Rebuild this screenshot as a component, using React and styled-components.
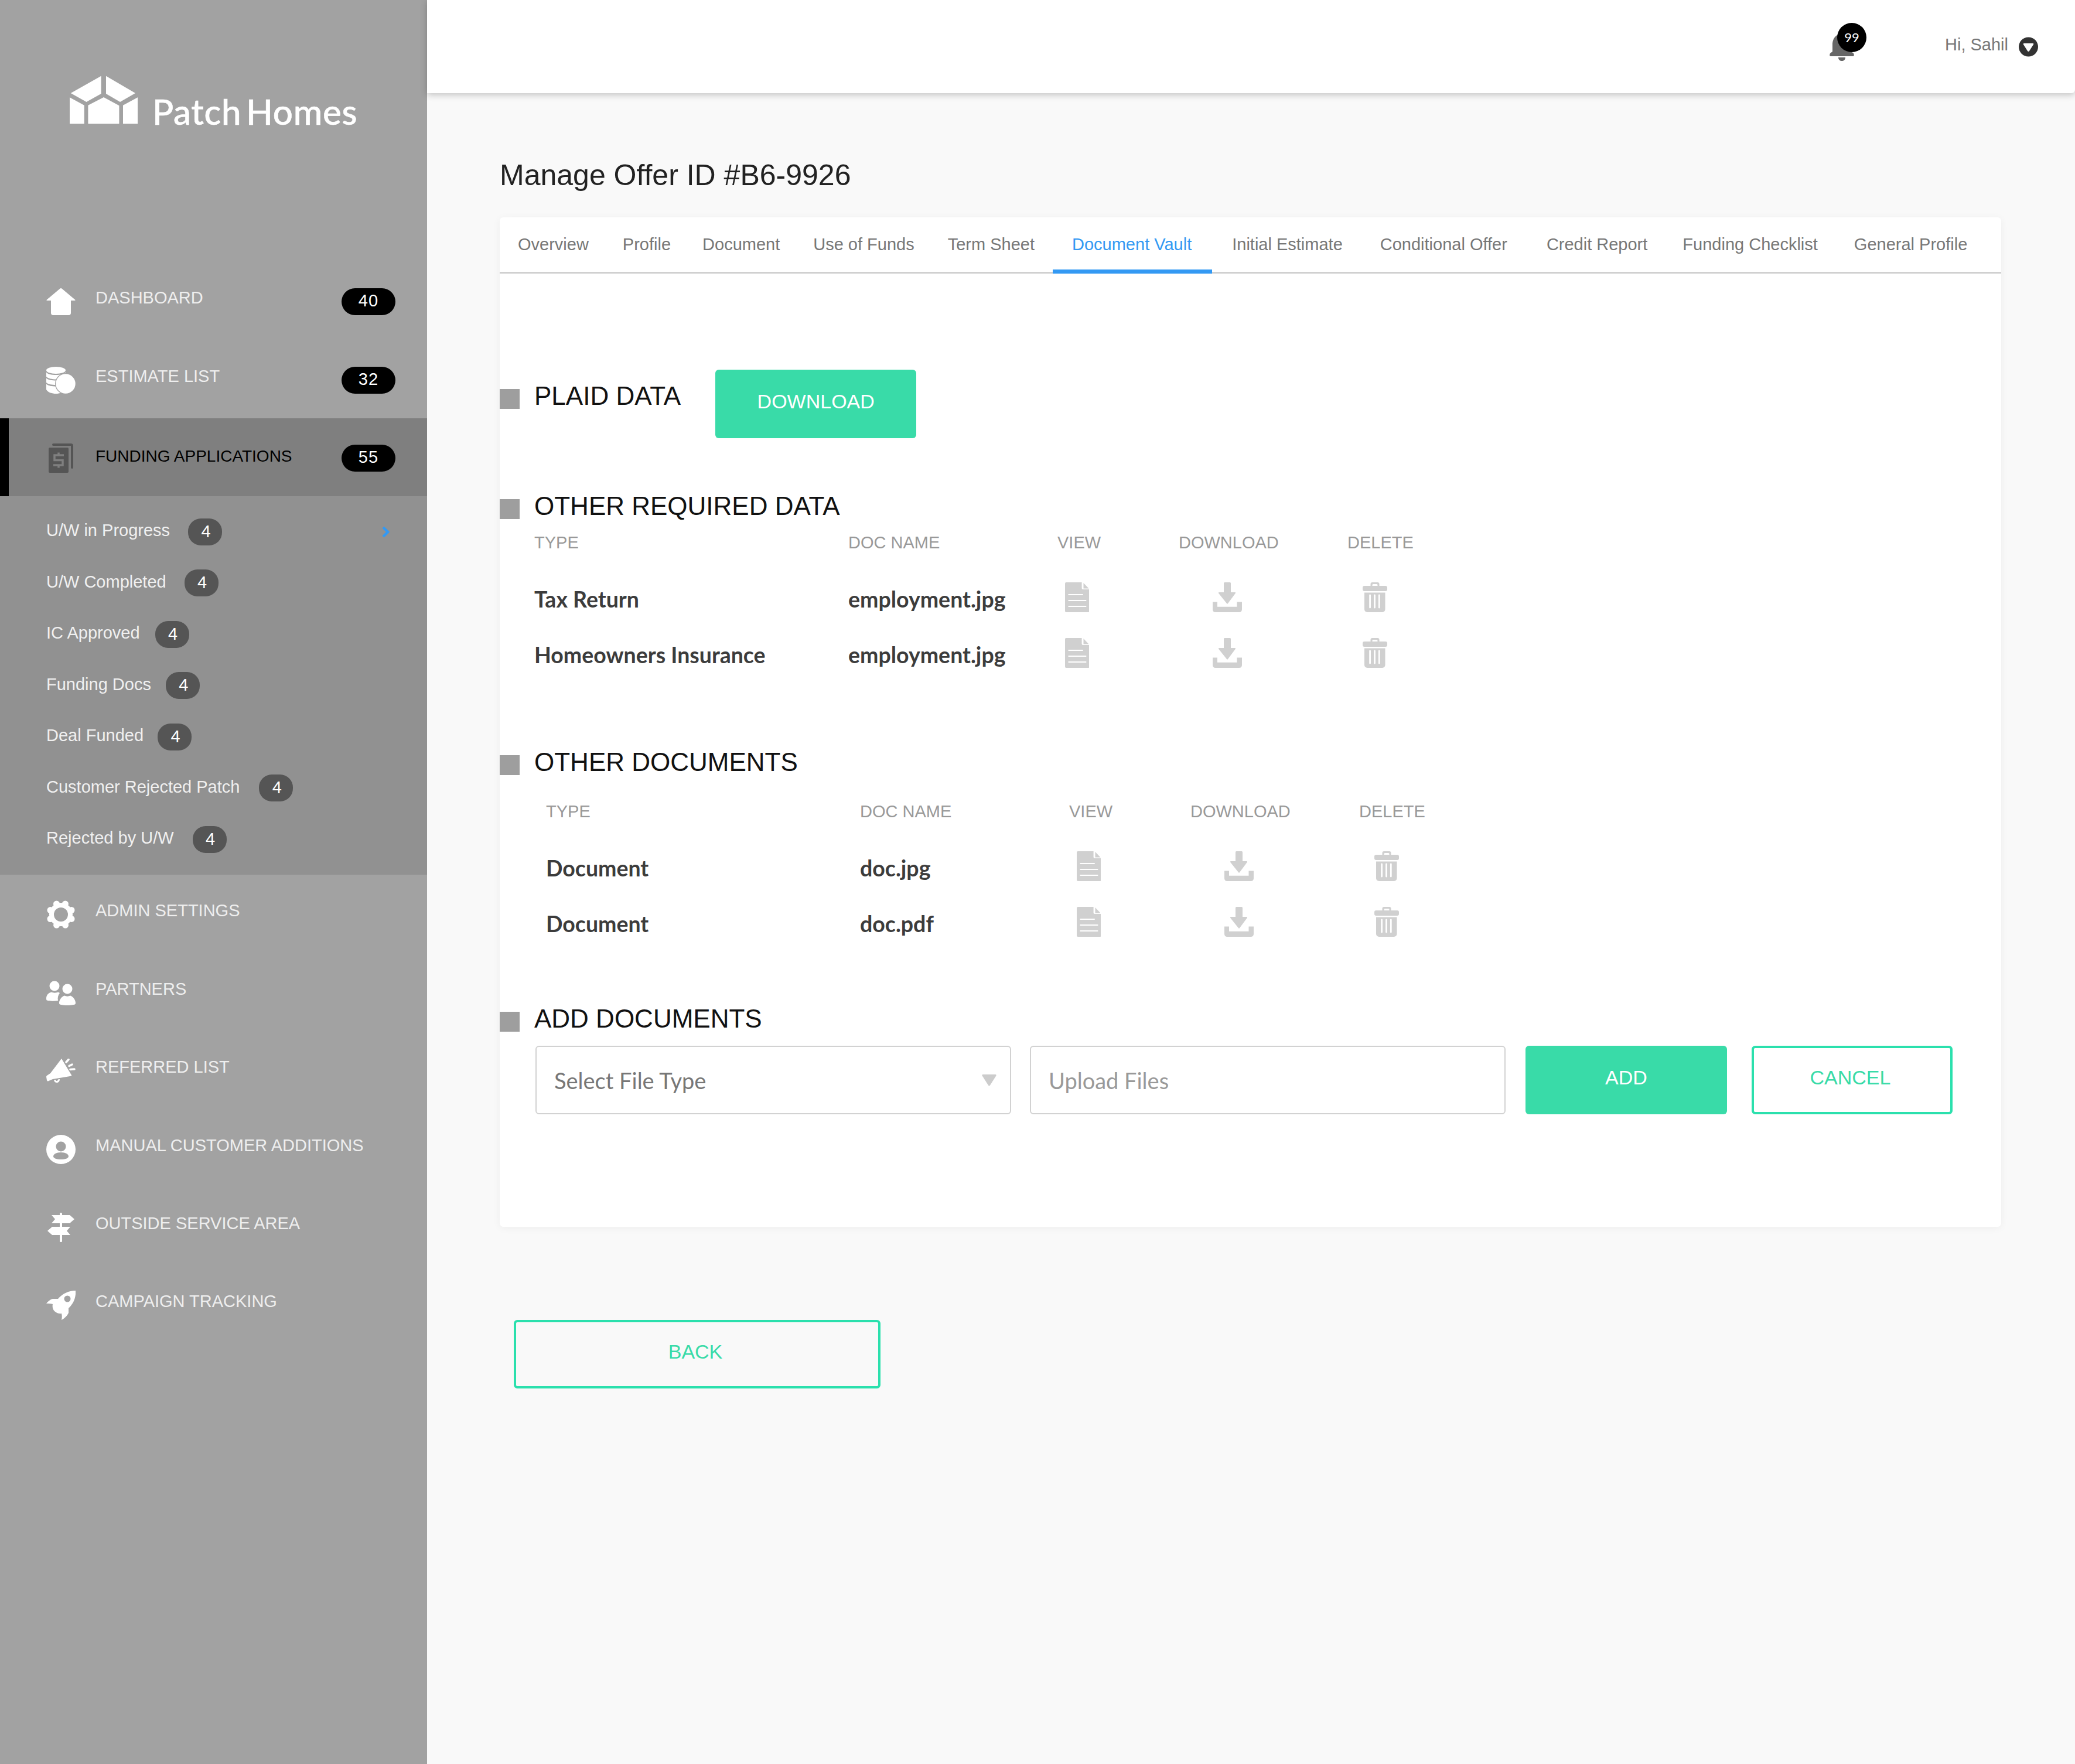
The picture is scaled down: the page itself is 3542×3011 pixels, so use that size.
import React from "react";
import styled, { createGlobalStyle } from "styled-components";

const Global = createGlobalStyle`
  html, body { margin: 0; padding: 0; background: #f9f9f9; }
  * { box-sizing: border-box; }
  body { font-family: "Liberation Sans", Arial, sans-serif; }
`;

const Page = styled.div`
  display: flex;
  width: 3542px;
  min-height: 3011px;
  background: #f9f9f9;
`;

const Aside = styled.aside`
  width: 729px;
  flex: none;
  background: #a2a2a2;
`;

const LogoArea = styled.div`
  height: 447px;
  padding: 129px 0 0 119px;
  display: flex;
  align-items: flex-start;
  gap: 25px;
`;

const LogoText = styled.span`
  font-family: "Lato", sans-serif;
  font-weight: 500;
  font-size: 60px;
  line-height: 60px;
  margin-top: 31px;
  letter-spacing: 0.7px;
  word-spacing: -8px;
  -webkit-text-stroke: 0.6px #fff;
  color: #fff;
  white-space: nowrap;
`;

const NavRow = styled.div`
  height: 133.4px;
  display: flex;
  align-items: center;
  padding: 3px 54px 0 79px;
  background: ${(p) => (p.$active ? "#7f7f7f" : "transparent")};
  box-shadow: ${(p) => (p.$active ? "inset 15px 0 0 #000" : "none")};
`;

const NavIcon = styled.span`
  width: 50px;
  height: 50px;
  flex: none;
  margin-right: 34px;
  display: flex;
  align-items: center;
  justify-content: center;
`;

const NavLabel = styled.span`
  flex: 1;
  font-size: ${(p) => (p.$active ? 28 : 29)}px;
  line-height: 36px;
  margin-bottom: ${(p) => (p.$active ? 6 : 14)}px;
  color: ${(p) => (p.$active ? "#000" : "#eeeeee")};
  white-space: nowrap;
`;

const NavBadge = styled.span`
  width: 92px;
  height: 46px;
  border-radius: 23px;
  background: #000;
  color: #fff;
  font-size: 29px;
  letter-spacing: 1px;
  line-height: 42px;
  text-align: center;
`;

const SubMenu = styled.div`
  background: #919191;
  height: 646px;
  padding: 17px 54px 0 79px;
`;

const SubRow = styled.div`
  height: 87.5px;
  display: flex;
  align-items: center;
`;

const SubLabel = styled.span`
  font-size: 29px;
  line-height: 36px;
  color: #f0f0f0;
  margin-bottom: 5px;
  white-space: nowrap;
`;

const SubBadge = styled.span`
  width: 58px;
  height: 46px;
  margin-left: ${(p) => p.$gap}px;
  border-radius: 22px;
  background: #555;
  color: #fff;
  font-size: 29px;
  line-height: 44px;
  text-align: center;
  padding-left: 3px;
`;

const SubChevron = styled.svg`
  margin-left: auto;
  margin-right: 10px;
`;

const Main = styled.main`
  flex: 1;
  min-width: 0;
`;

const TopBar = styled.header`
  height: 159px;
  background: #fff;
  border-bottom-right-radius: 6px;
  box-shadow: 0 3px 12px rgba(0, 0, 0, 0.22);
  display: flex;
  align-items: center;
  justify-content: flex-end;
  padding-right: 63px;
`;

const BellWrap = styled.div`
  position: relative;
  width: 42px;
  height: 46px;
  margin: 3px 155px 0 0;
`;

const BellCount = styled.span`
  position: absolute;
  top: -19px;
  left: 13px;
  width: 50px;
  height: 50px;
  border-radius: 50%;
  background: #000;
  color: #fff;
  font-family: "Lato", sans-serif;
  font-weight: 400;
  font-size: 22px;
  line-height: 50px;
  text-align: center;
`;

const Greeting = styled.span`
  font-size: 29px;
  line-height: 36px;
  color: #777;
  margin: 0 18px 8px 0;
`;

const Content = styled.div`
  padding: 110px 126px 0 124px;
`;

const PageTitle = styled.h1`
  margin: 0 0 42px;
  font-weight: 400;
  font-size: 50px;
  line-height: 60px;
  color: #222;
`;

const Card = styled.section`
  background: #fff;
  border-radius: 6px;
  box-shadow: 0 2px 14px rgba(0, 0, 0, 0.05);
  padding-bottom: 192px;
`;

const TabBar = styled.nav`
  height: 96px;
  display: flex;
  padding-left: 31px;
  border-bottom: 3px solid #d0d0d0;
`;

const Tab = styled.span`
  height: 96px;
  margin-left: ${(p) => p.$gap}px;
  padding: ${(p) => (p.$active ? "3px 35px 0 33px" : "3px 0 0")};
  display: flex;
  align-items: center;
  font-size: 29px;
  white-space: nowrap;
  color: ${(p) => (p.$active ? "#3399f3" : "#777")};
  border-bottom: 7px solid ${(p) => (p.$active ? "#3399f3" : "transparent")};
`;

const PlaidRow = styled.div`
  display: flex;
  align-items: flex-start;
  margin-top: 164px;
  gap: 59px;
`;

const Heading = styled.div`
  display: flex;
  align-items: flex-start;
  gap: 25px;
  margin-top: ${(p) => p.$top}px;
`;

const Bullet = styled.span`
  width: 34px;
  height: 34px;
  margin-top: 10px;
  background: #9e9e9e;
  flex: none;
`;

const HeadingText = styled.h2`
  margin: 0;
  font-weight: 400;
  font-size: 44px;
  line-height: 44px;
  color: #111;
  white-space: nowrap;
`;

const SolidButton = styled.button`
  width: ${(p) => p.$w}px;
  height: 117px;
  border: 0;
  border-radius: 6px;
  background: #39dba8;
  color: #fff;
  font-family: inherit;
  font-size: 34px;
  padding: 0 0 8px;
`;

const OutlineButton = styled.button`
  width: ${(p) => p.$w}px;
  height: 117px;
  border: 4px solid #2be0ad;
  border-radius: 6px;
  background: transparent;
  color: #39dba8;
  font-family: inherit;
  font-size: 34px;
  padding: 0 6px 8px 0;
`;

const Table = styled.div`
  margin: ${(p) => p.$top}px 0 0 ${(p) => p.$left}px;
`;

const Grid = styled.div`
  display: grid;
  grid-template-columns: 536px 357px 207px 288px 200px;
  align-items: center;
`;

const HeadRow = styled(Grid)`
  height: 44px;
  margin-bottom: 29px;
  font-size: 29px;
  color: #999;
`;

const BodyRow = styled(Grid)`
  height: 95px;
  font-family: "Lato", sans-serif;
  font-weight: 700;
  font-size: 37.5px;
  color: #3c3c3c;
`;

const TextCell = styled.span`
  margin-bottom: 4px;
`;

const IconCell = styled.span`
  display: flex;
  padding-left: ${(p) => p.$left}px;
  margin-bottom: 10px;
`;

const AddRow = styled.div`
  display: flex;
  margin: 24px 0 0 61px;
`;

const Field = styled.div`
  width: 812px;
  height: 117px;
  margin-right: ${(p) => p.$gap}px;
  border: 2.5px solid #d2d2d2;
  border-radius: 6px;
  padding: 0 23px 0 30px;
  display: flex;
  align-items: center;
  justify-content: space-between;
  font-family: "Lato", sans-serif;
  font-size: 38px;
  color: ${(p) => p.$color};
`;

const CancelSlot = styled.div`
  margin-left: 42px;
`;

const BackWrap = styled.div`
  margin: 159px 0 0 24px;
`;

const Fill = ({ children, w = 50, h = 50, color = "#fff" }) => (
  <svg width={w} height={h} viewBox={`0 0 ${w} ${h}`} fill={color}>{children}</svg>
);

const HouseIcon = () => (
  <Fill h={46}>
    <path d="M23 1a3 3 0 0 1 4 0L49 19.500Q50.500 21 48.500 21H42V42a4 4 0 0 1-4 4H12a4 4 0 0 1-4-4V21H1.500Q-.5 21 1 19.500Z" />
  </Fill>
);

const CoinsIcon = () => (
  <Fill h={46}>
    <ellipse cx="16.500" cy="6" rx="16.500" ry="6" />
    <path d="M0 9.500C3 13 9 14 16.500 14S30 13 33 9.500V17C30 20 23 21.500 16.500 21.500S3 20 0 17Z" />
    <path d="M0 19.500C3 22.500 10 23.500 16.500 23.500S30 22.500 33 19.500V27C30 30 23 31 16.500 31S3 30 0 27Z" />
    <path d="M0 29.500C3 32.500 10 33.500 16.500 33.500S30 32.500 33 29.500V39C30 44 23 46 16.500 46S3 44 0 39Z" />
    <circle cx="33" cy="29" r="18" fill="#a2a2a2" />
    <circle cx="33" cy="29" r="16.700" />
  </Fill>
);

const FundingIcon = () => (
  <svg width="42" height="50" viewBox="0 0 42 50">
    <path d="M8 2H38a2 2 0 0 1 2 2V41" fill="none" stroke="#555" strokeWidth="4" strokeLinecap="round" />
    <rect x="0" y="7" width="34" height="43" rx="2" fill="#555" />
    <path d="M26 20H10V28.500H24V37H8M17 15.500V20M17 37V41.500" fill="none" stroke="#7f7f7f" strokeWidth="3.500" />
  </svg>
);

const GearIcon = () => (
  <Fill h={50}>
    <circle cx="25" cy="25" r="20" />
    {[0, 45, 90, 135, 180, 225, 270, 315].map((a) => (
      <circle key={a} cx={25 + 19.5 * Math.cos((a * Math.PI) / 180 + 0.39)} cy={25 + 19.5 * Math.sin((a * Math.PI) / 180 + 0.39)} r="5.500" />
    ))}
    <circle cx="25" cy="25" r="12" fill="#a2a2a2" />
  </Fill>
);

const PartnersIcon = () => (
  <Fill h={42}>
    <circle cx="14" cy="9" r="8.500" />
    <path d="M0 30C0 25 4 20 9 19.500C12 21 17 21 20 19.500C21 19.500 22 20 23 21C20 25 19 29 20 34C13 35 6 35 1 33.500C0 33 0 31 0 30Z" />
    <circle cx="36" cy="14" r="8.500" />
    <path d="M22 38C22 33 26 27 31 25.500C34 27 38 27 41 25.500C46 27 50 33 50 38C50 40 49 40.500 48 40.800C40 42.500 31 42.500 24 40.800C23 40.500 22 40 22 38Z" />
  </Fill>
);

const MegaphoneIcon = () => (
  <Fill h={42}>
    <path d="M26 0L43 28Q44 30 42 29.800L11 35L3 38.500Q1.500 38.500 1 37L0 31Q0 30 1 29L7 25Z" />
    <path d="M13 36.500C13.500 39.500 15.500 41 18 41S23 39 23 35L20 35.500C20 37 19 38 18 38S16 37.500 15.800 36Z" />
    <path d="M34 6L38 1.500" stroke="#fff" strokeWidth="3.500" strokeLinecap="round" fill="none" />
    <path d="M39 12.500L44 10" stroke="#fff" strokeWidth="3.500" strokeLinecap="round" fill="none" />
    <path d="M41 18.500L48 18" stroke="#fff" strokeWidth="3.500" strokeLinecap="round" fill="none" />
  </Fill>
);

const PersonIcon = () => (
  <Fill h={50}>
    <circle cx="25" cy="25" r="25" />
    <circle cx="25" cy="20" r="8.500" fill="#a2a2a2" />
    <path d="M12 37C12 33 17 30 25 30S38 33 38 37C38 40 32 42 25 42S12 40 12 37Z" fill="#a2a2a2" />
  </Fill>
);

const SignIcon = () => (
  <Fill w={46} h={50}>
    <rect x="21" y="0" width="4" height="50" rx="1.500" />
    <path d="M7 4H38L46 11L38 18H7L13 11Z" />
    <path d="M8 24H39L33 31L39 38H8L0 31Z" />
  </Fill>
);

const RocketIcon = () => (
  <Fill h={50}>
    <path d="M50 0C51 12 46 23 38 30V38C35 44 30 48 26 50C27 46 27 42 26 39C22 40 17 38 14 35C11 32 10 27 11 23C8 22 4 22 0 22C3 18 7 15 11 14H20C28 5 38 0 50 0Z" />
    <circle cx="36" cy="14" r="5.500" fill="#a2a2a2" />
  </Fill>
);

const LogoMark = () => (
  <Fill w={116} h={83}>
    <path d="M53.600.7V31L28.500 45L1.800 30Z" />
    <path d="M62 .7L112 30L86 45L62 31Z" />
    <path d="M0 37.300L24.800 50.700V82.300H0Z" />
    <path d="M31.400 50.700L58 37L84.400 51.300V82.300H31.400Z" />
    <path d="M91 50.700L116 37.300V82.300H91Z" />
  </Fill>
);

const BellIcon = () => (
  <svg width="42" height="46" viewBox="0 0 42 46" fill="#666">
    <path d="M21 0C11 0 6 7 5 16V30L1 33Q-1 38 2 38H40Q43 38 41 33L37 30V16C36 7 31 0 21 0Z" />
    <path d="M15 40H27C27 44 24 46 21 46S15 44 15 40Z" />
  </svg>
);

const DownCircle = () => (
  <svg width="33" height="34" viewBox="0 0 33 34">
    <circle cx="16.500" cy="17" r="16.500" fill="#333" />
    <path d="M9 11H24Q26 11 25 13L18 24Q16.500 26 15 24L8 13Q7 11 9 11Z" fill="#fff" />
  </svg>
);

const DocIcon = () => (
  <svg width="41" height="51" viewBox="0 0 41 51">
    <path d="M2 0H28.600V10A2 2 0 0 0 30.600 12H41.500V49A2 2 0 0 1 39.500 51H2A2 2 0 0 1 0 49V2A2 2 0 0 1 2 0Z" fill="#d0d0d0" />
    <path d="M31.500 1L40.500 10.500H31.500Z" fill="#d0d0d0" />
    <path d="M6.300 21H30M6.300 31H35.500M6.300 41H35.500" stroke="#fff" strokeWidth="2" strokeLinecap="round" />
  </svg>
);

const SaveIcon = () => (
  <svg width="50" height="51" viewBox="0 0 50 51" fill="#d0d0d0">
    <path d="M19 1.500A1.500 1.500 0 0 1 20.500 0H29.500A1.500 1.500 0 0 1 31 1.500V17H38Q39.500 17 39 18.500L26 36Q25 37.500 24 36L10 18.500Q9.500 17 11 17H19Z" />
    <path d="M0 33.500H8V41.700H41.500V33.500H50V46Q50 51 45 51H5Q0 51 0 46Z" />
  </svg>
);

const TrashIcon = () => (
  <svg width="42" height="51" viewBox="0 0 42 51" fill="#d0d0d0">
    <path d="M13.500 6V3A3 3 0 0 1 16.500 0H25.500A3 3 0 0 1 28.500 3V6H39A3 3 0 0 1 42 9V12A3 3 0 0 1 39 15H3A3 3 0 0 1 0 12V9A3 3 0 0 1 3 6ZM16.500 6H25.500V4.500Q25.500 3 24 3H18Q16.500 3 16.500 4.500Z" fillRule="evenodd" />
    <path d="M3 17.500H38.500V46A5 5 0 0 1 33.500 51H8A5 5 0 0 1 3 46Z" />
    <path d="M12.600 22V43M20.500 22V43M28.300 22V43" stroke="#fff" strokeWidth="2.800" strokeLinecap="round" />
  </svg>
);

const nav1 = [
  { label: "DASHBOARD", badge: 40, icon: <HouseIcon /> },
  { label: "ESTIMATE LIST", badge: 32, icon: <CoinsIcon /> },
  { label: "FUNDING APPLICATIONS", badge: 55, icon: <FundingIcon />, active: true },
];
const sub = [
  ["U/W in Progress", 31],
  ["U/W Completed", 31],
  ["IC Approved", 26],
  ["Funding Docs", 25],
  ["Deal Funded", 24],
  ["Customer Rejected Patch", 33],
  ["Rejected by U/W", 32],
];
const nav2 = [
  ["ADMIN SETTINGS", <GearIcon />],
  ["PARTNERS", <PartnersIcon />],
  ["REFERRED LIST", <MegaphoneIcon />],
  ["MANUAL CUSTOMER ADDITIONS", <PersonIcon />],
  ["OUTSIDE SERVICE AREA", <SignIcon />],
  ["CAMPAIGN TRACKING", <RocketIcon />],
];
const tabs = [
  ["Overview", 0],
  ["Profile", 58],
  ["Document", 54],
  ["Use of Funds", 57],
  ["Term Sheet", 57],
  ["Document Vault", 31, true],
  ["Initial Estimate", 34],
  ["Conditional Offer", 64],
  ["Credit Report", 67],
  ["Funding Checklist", 60],
  ["General Profile", 62],
];

const DocTable = ({ top, left, rows }) => (
  <Table $top={top} $left={left}>
    <HeadRow>
      <span>TYPE</span>
      <span>DOC NAME</span>
      <span>VIEW</span>
      <span>DOWNLOAD</span>
      <span>DELETE</span>
    </HeadRow>
    {rows.map(([type, name]) => (
      <BodyRow key={type + name}>
        <TextCell>{type}</TextCell>
        <TextCell>{name}</TextCell>
        <IconCell $left={13}><DocIcon /></IconCell>
        <IconCell $left={58}><SaveIcon /></IconCell>
        <IconCell $left={26}><TrashIcon /></IconCell>
      </BodyRow>
    ))}
  </Table>
);

export default function App() {
  return (
    <Page>
      <Global />
      <Aside>
        <LogoArea>
          <LogoMark />
          <LogoText>Patch Homes</LogoText>
        </LogoArea>
        {nav1.map((n) => (
          <NavRow key={n.label} $active={n.active}>
            <NavIcon>{n.icon}</NavIcon>
            <NavLabel $active={n.active}>{n.label}</NavLabel>
            <NavBadge>{n.badge}</NavBadge>
          </NavRow>
        ))}
        <SubMenu>
          {sub.map(([label, gap], i) => (
            <SubRow key={label}>
              <SubLabel>{label}</SubLabel>
              <SubBadge $gap={gap}>4</SubBadge>
              {i === 0 && (
                <SubChevron width="13" height="20" viewBox="0 0 13 20">
                  <path d="M2 2L10 10L2 18" fill="none" stroke="#3399f3" strokeWidth="4.500" />
                </SubChevron>
              )}
            </SubRow>
          ))}
        </SubMenu>
        {nav2.map(([label, icon]) => (
          <NavRow key={label}>
            <NavIcon>{icon}</NavIcon>
            <NavLabel>{label}</NavLabel>
          </NavRow>
        ))}
      </Aside>
      <Main>
        <TopBar>
          <BellWrap>
            <BellIcon />
            <BellCount>99</BellCount>
          </BellWrap>
          <Greeting>Hi, Sahil</Greeting>
          <DownCircle />
        </TopBar>
        <Content>
          <PageTitle>Manage Offer ID #B6-9926</PageTitle>
          <Card>
            <TabBar>
              {tabs.map(([label, gap, active]) => (
                <Tab key={label} $gap={gap} $active={active}>{label}</Tab>
              ))}
            </TabBar>
            <PlaidRow>
              <Heading $top={23}>
                <Bullet />
                <HeadingText>PLAID DATA</HeadingText>
              </Heading>
              <SolidButton $w={343}>DOWNLOAD</SolidButton>
            </PlaidRow>
            <Heading $top={94}>
              <Bullet />
              <HeadingText>OTHER REQUIRED DATA</HeadingText>
            </Heading>
            <DocTable top={18} left={59} rows={[["Tax Return", "employment.jpg"], ["Homeowners Insurance", "employment.jpg"]]} />
            <Heading $top={112}>
              <Bullet />
              <HeadingText>OTHER DOCUMENTS</HeadingText>
            </Heading>
            <DocTable top={40} left={79} rows={[["Document", "doc.jpg"], ["Document", "doc.pdf"]]} />
            <Heading $top={91}>
              <Bullet />
              <HeadingText>ADD DOCUMENTS</HeadingText>
            </Heading>
            <AddRow>
              <Field $gap={32} $color="#777">
                Select File Type
                <svg width="25" height="20" viewBox="0 0 25 20">
                  <path d="M2 0H23Q25 0 24.500 2L14 18.500Q12.500 20.500 11 18.500L.5 2Q0 0 2 0Z" fill="#ccc" />
                </svg>
              </Field>
              <Field $gap={34} $color="#999">Upload Files</Field>
              <SolidButton $w={344}>ADD</SolidButton>
              <CancelSlot>
                <OutlineButton $w={343}>CANCEL</OutlineButton>
              </CancelSlot>
            </AddRow>
          </Card>
          <BackWrap>
            <OutlineButton $w={626}>BACK</OutlineButton>
          </BackWrap>
        </Content>
      </Main>
    </Page>
  );
}
